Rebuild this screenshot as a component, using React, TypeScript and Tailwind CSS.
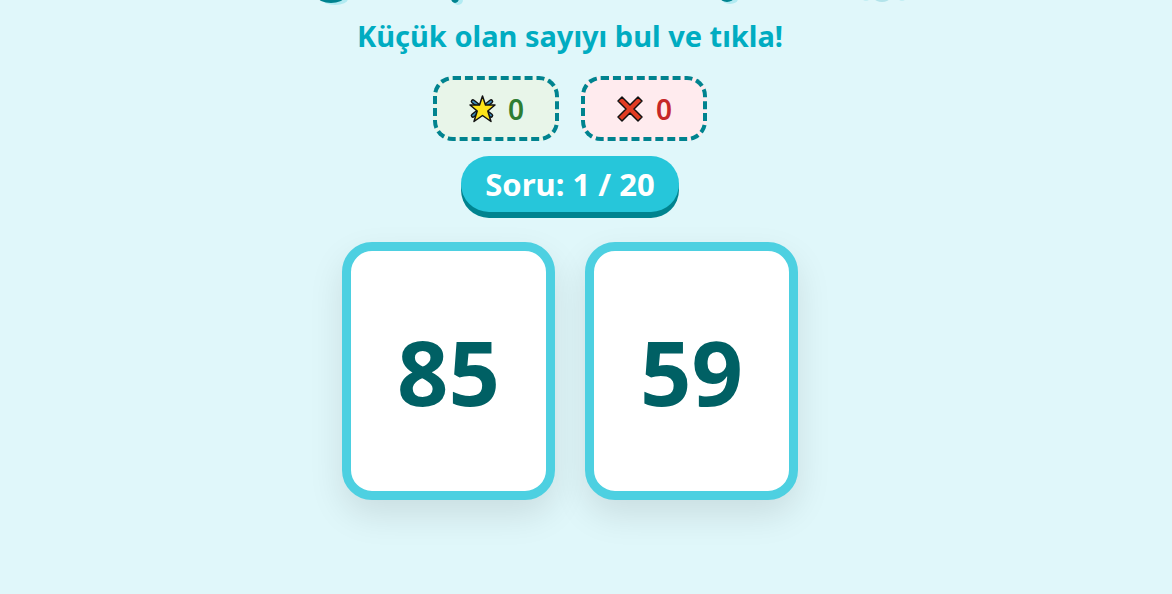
import { clsx } from "clsx";

const TITLE_MARKS = [
    { cx: 335, cy: -1, rx: 13, ry: 6, fill: "#b2ebf2" },
    { cx: 331, cy: -3, rx: 13, ry: 6, fill: "#00838f" },
    { cx: 458, cy: 0, rx: 5, ry: 5, fill: "#b2ebf2" },
    { cx: 455, cy: -2, rx: 4, ry: 5, fill: "#00838f" },
    { cx: 730, cy: -1, rx: 8, ry: 5, fill: "#b2ebf2" },
    { cx: 727, cy: -3, rx: 7, ry: 5, fill: "#00838f" },
    { cx: 866, cy: -1, rx: 3, ry: 2, fill: "#c4eef3" },
    { cx: 882, cy: -1, rx: 7, ry: 3, fill: "#b2e3ea" },
    { cx: 902, cy: -1, rx: 3, ry: 2, fill: "#c4eef3" },
];

function StarIcon() {
    return (
        <svg viewBox="0 0 28 28" className="size-7" aria-hidden="true">
            <g strokeLinecap="round">
                <path d="M5 6.500L23 20.500M23 6.500L5 20.500" stroke="#111" strokeWidth="4.600" />
                <path d="M5 6.500L23 20.500M23 6.500L5 20.500" stroke="#3b88b5" strokeWidth="1.800" />
            </g>
            <path d="M14.500 1L17.500 10H27L19.800 16L23 26.500L14.500 20.500L6 26.500L9.200 16L2 10H11.500Z" fill="#fde31a" stroke="#111" strokeWidth="1.500" strokeLinejoin="round" />
        </svg>
    );
}

function CrossIcon() {
    return (
        <svg viewBox="0 0 28 28" className="size-7" aria-hidden="true">
            <path d="M6 2L14 10L22 2L26 6L18 14L26 22L22 26L14 18L6 26L2 22L10 14L2 6Z" fill="#e23b22" stroke="#111" strokeWidth="1.500" strokeLinejoin="round" />
        </svg>
    );
}

function Score({ kind, value }: { kind: "correct" | "wrong", value: number }) {
    return (
        <div className={clsx(
            "flex h-[65px] w-[126px] items-center justify-center gap-3 rounded-[20px] border-4 border-dashed border-[#00838f] text-[28px] font-semibold",
            kind === "correct" ? "bg-[#e8f5e9] text-[#2e7d32]" : "bg-[#ffebee] text-[#c62828]"
        )}>
            {kind === "correct" ? <StarIcon /> : <CrossIcon />}
            <span>{value}</span>
        </div>
    );
}

function NumberCard({ value }: { value: number }) {
    return (
        <button
            type="button"
            className="flex h-[258px] w-[213px] cursor-pointer items-center justify-center rounded-[30px] border-[9px] border-[#4dd0e1] bg-white text-[90px] font-bold text-[#006064] shadow-[0_15px_35px_rgba(0,0,0,0.1)]"
        >
            {value}
        </button>
    );
}

export default function App() {
    return (
        <main className="relative flex min-h-screen flex-col items-center bg-[#e0f7fa] pt-3 pr-8 font-['Comic_Sans_MS','Noto_Sans',sans-serif]">
            <svg viewBox="0 0 1172 8" className="absolute top-0 left-0 w-full" aria-hidden="true">
                {TITLE_MARKS.map((m) => (
                    <ellipse key={m.cx} {...m} />
                ))}
            </svg>
            <h2 className="text-[29px] leading-12 font-bold text-[#00acc1]">Küçük olan sayıyı bul ve tıkla!</h2>
            <div className="mt-4 flex gap-[22px]">
                <Score kind="correct" value={0} />
                <Score kind="wrong" value={0} />
            </div>
            <div className="mt-[15px] flex h-14 items-center rounded-full bg-[#26c6da] px-6 text-[31px] font-bold text-white shadow-[0_6px_0_#00838f]">
                Soru: 1 / 20
            </div>
            <div className="mt-[30px] flex gap-[30px]">
                <NumberCard value={85} />
                <NumberCard value={59} />
            </div>
        </main>
    );
}
